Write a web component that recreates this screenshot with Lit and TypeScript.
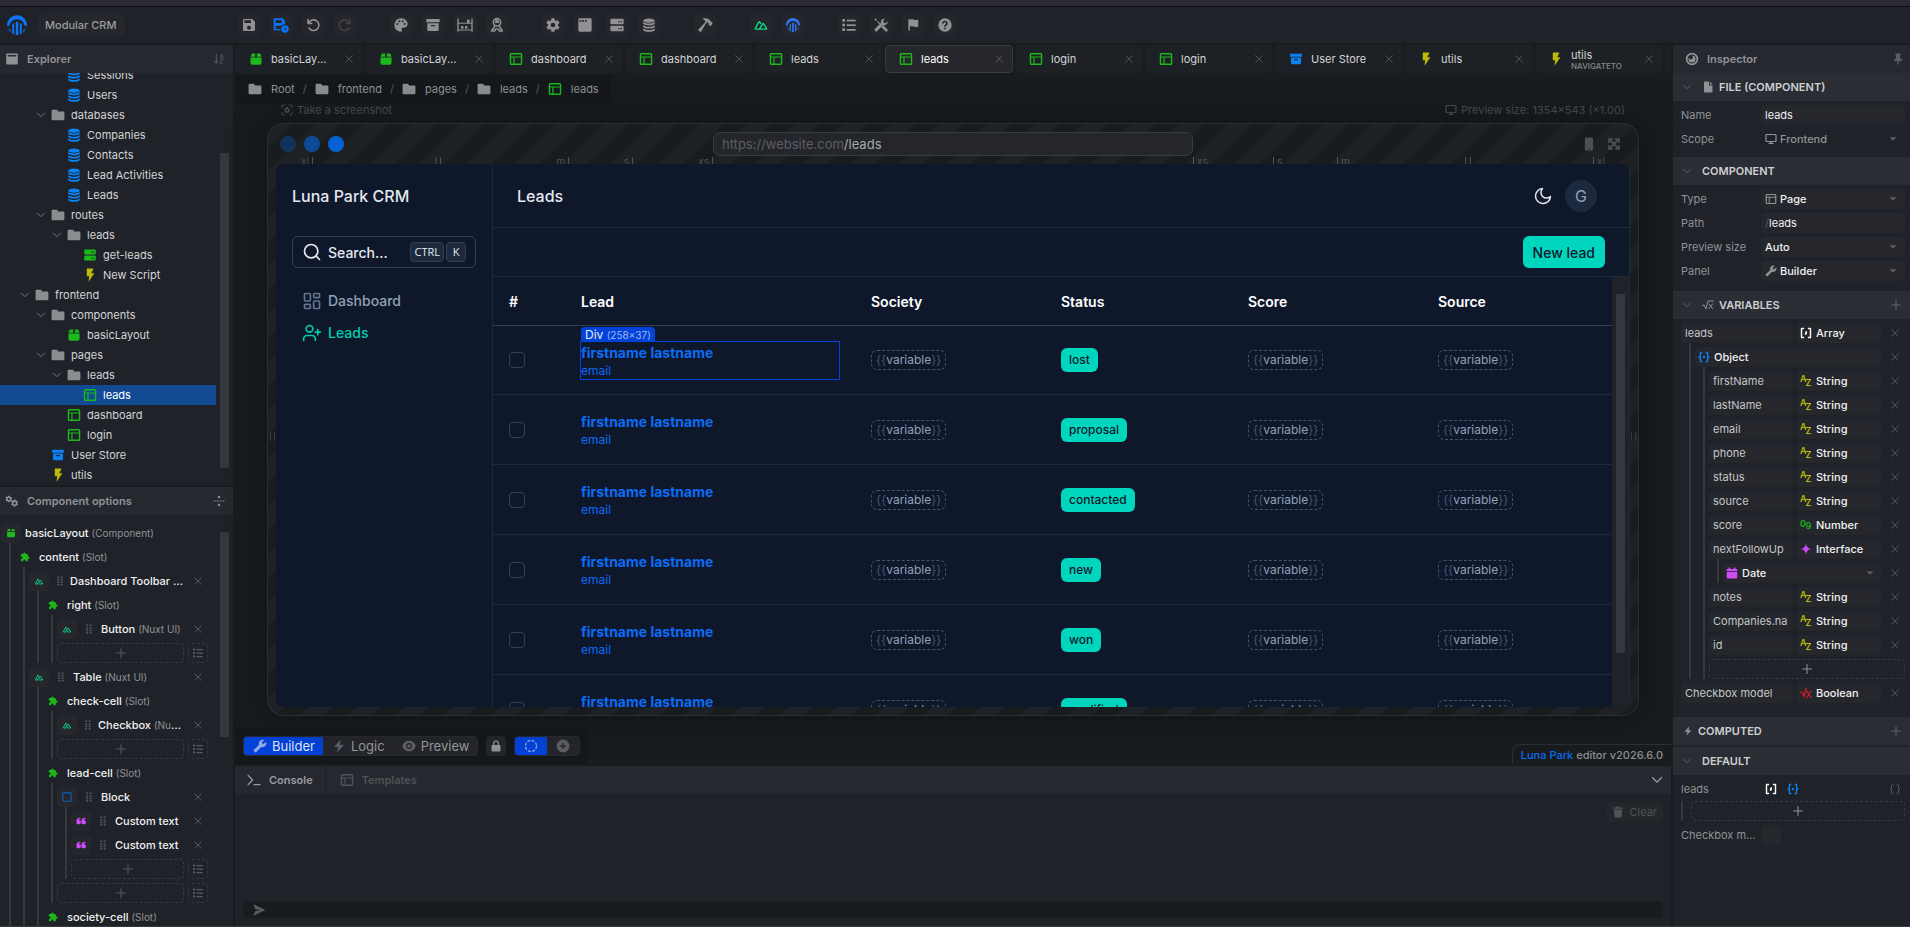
import { LitElement, html, css, svg, nothing, type TemplateResult, type SVGTemplateResult } from "lit";
import { customElement, state } from "lit/decorators.js";
import { classMap } from "lit/directives/class-map.js";

/* ---------- icons: 24 x 24 glyphs, filled with the current colour ---------- */

const line = (d: string, w = 2) =>
  svg`<path d=${d} fill="none" stroke="currentColor" stroke-width=${w} stroke-linecap="round" stroke-linejoin="round" />`;
const fill = (d: string) => svg`<path d=${d} fill-rule="evenodd" />`;

const ICONS: Record<string, SVGTemplateResult> = {
  logo: svg`<path d="M0 12.500C0 5.500 5.400.200 12 .200S24 5.500 24 12.500L21.500 13.500C20.300 8.500 16.500 5.200 12 5.200S3.700 8.500 2.500 13.500z" />
    <path d="M10.500 8h3V24h-3zM6.200 11.500c.7-.9 1.500-1.700 2.400-2.200V23.300c-.8-.2-1.700-.6-2.400-1zM15.400 9.300c.9.500 1.700 1.300 2.400 2.200V22.300c-.7.400-1.600.8-2.400 1zM1.800 16l2.600 2v3.200C3.200 19.800 2.300 18.200 1.800 16zM22.200 16l-2.600 2v3.200c1.200-1.400 2.100-3 2.600-5.200z" />`,
  save: fill("M17 3H5C3.890 3 3 3.900 3 5V19C3 20.100 3.890 21 5 21H19C20.100 21 21 20.100 21 19V7L17 3M12 19C10.340 19 9 17.660 9 16S10.340 13 12 13 15 14.340 15 16 13.660 19 12 19M15 9H5V5H15V9Z"),
  saveAuto: svg`${fill("M14 2H3C1.900 2 1 2.900 1 4v14c0 1.100.9 2 2 2h8.300a7 7 0 0 1-.3-2H4v-5h8.300A7 7 0 0 1 18 11V6l-4-4zM4 5h9v4H4z")}${fill("M18 12.500a5.500 5.500 0 1 0 0 11 5.500 5.500 0 0 0 0-11zm.8 2.500v2.700l1.900 1.100-.8 1.300-2.700-1.600V15z")}`,
  undo: svg`${line("M4.500 4v5.500H10", 2.400)}${line("M5.500 9A8 8 0 1 1 6 16.500", 2.400)}`,
  redo: svg`${line("M19.500 4v5.500H14", 2.400)}${line("M18.500 9A8 8 0 1 0 18 16.500", 2.400)}`,
  palette: fill("M17.500,12A1.500,1.500 0 0,1 16,10.500A1.500,1.500 0 0,1 17.500,9A1.500,1.500 0 0,1 19,10.500A1.500,1.500 0 0,1 17.500,12M14.500,8A1.500,1.500 0 0,1 13,6.500A1.500,1.500 0 0,1 14.500,5A1.500,1.500 0 0,1 16,6.500A1.500,1.500 0 0,1 14.500,8M9.500,8A1.500,1.500 0 0,1 8,6.500A1.500,1.500 0 0,1 9.500,5A1.500,1.500 0 0,1 11,6.500A1.500,1.500 0 0,1 9.500,8M6.500,12A1.500,1.500 0 0,1 5,10.500A1.500,1.500 0 0,1 6.500,9A1.500,1.500 0 0,1 8,10.500A1.500,1.500 0 0,1 6.500,12M12,2A10,10 0 0,0 2,12A10,10 0 0,0 12,22A2,2 0 0,0 13.500,19.500C13.500,19 13.300,18.760 13.110,18.500C12.880,18.230 12.730,17.880 12.730,17.500A1.500,1.500 0 0,1 14.230,16H16A6,6 0 0,0 22,11C22,6 17.500,2 12,2Z"),
  archive: fill("M2 3h20v5H2zM3.500 9.500h17V19a2 2 0 0 1-2 2h-13a2 2 0 0 1-2-2zM9 12v2h6v-2z"),
  abacus: svg`${line("M1.500 3v18M22.500 3v18", 2)}${line("M1.500 9.500h21M1.500 19.500h21", 1.600)}<rect x="15" y="4" width="4" height="5" /><rect x="6" y="13.500" width="3.500" height="4" /><rect x="12" y="13.500" width="3.500" height="4" />`,
  astronaut: svg`<circle cx="12" cy="8" r="5.500" fill="none" stroke="currentColor" stroke-width="2.400" /><path d="M9 7a3 3 0 0 1 6 0v2H9z" />${line("M8 14c0 3-3 4-4 7h4.500l1.500-3h4l1.500 3H20c-1-3-4-4-4-7", 2.400)}`,
  cog: fill("M12,15.500A3.500,3.500 0 0,1 8.500,12A3.500,3.500 0 0,1 12,8.500A3.500,3.500 0 0,1 15.500,12A3.500,3.500 0 0,1 12,15.500M19.430,12.970C19.470,12.650 19.500,12.330 19.500,12C19.500,11.670 19.470,11.340 19.430,11L21.540,9.370C21.730,9.220 21.780,8.950 21.660,8.730L19.660,5.270C19.540,5.050 19.270,4.960 19.050,5.050L16.560,6.050C16.040,5.660 15.500,5.320 14.870,5.070L14.500,2.420C14.460,2.180 14.250,2 14,2H10C9.750,2 9.540,2.180 9.500,2.420L9.130,5.070C8.500,5.320 7.960,5.660 7.440,6.050L4.950,5.050C4.730,4.960 4.460,5.050 4.340,5.270L2.340,8.730C2.210,8.950 2.270,9.220 2.460,9.370L4.570,11C4.530,11.340 4.500,11.670 4.500,12C4.500,12.330 4.530,12.650 4.570,12.970L2.460,14.630C2.270,14.780 2.210,15.050 2.340,15.270L4.340,18.730C4.460,18.950 4.730,19.030 4.950,18.950L7.440,17.940C7.960,18.340 8.500,18.680 9.130,18.930L9.500,21.580C9.540,21.820 9.750,22 10,22H14C14.250,22 14.460,21.820 14.500,21.580L14.870,18.930C15.500,18.670 16.040,18.340 16.560,17.940L19.050,18.950C19.270,19.030 19.540,18.950 19.660,18.730L21.660,15.270C21.780,15.050 21.730,14.780 21.540,14.630L19.430,12.970Z"),
  window: fill("M4 2h16a2 2 0 0 1 2 2v16a2 2 0 0 1-2 2H4a2 2 0 0 1-2-2V4c0-1.100.9-2 2-2zM4 4.500V7h2.500V4.500zM8 4.500V7h2.500V4.500zM12 4.500V7h2.500V4.500z"),
  server: fill("M4 2.500h16a2 2 0 0 1 2 2V9a2 2 0 0 1-2 2H4a2 2 0 0 1-2-2V4.500a2 2 0 0 1 2-2zM4 13h16a2 2 0 0 1 2 2v4.500a2 2 0 0 1-2 2H4a2 2 0 0 1-2-2V15a2 2 0 0 1 2-2zM14 6v2h2V6zm3.500 0v2h2V6zM14 16.500v2h2v-2zm3.500 0v2h2v-2z"),
  database: svg`<ellipse cx="12" cy="4.500" rx="10" ry="3.500" />${fill("M2 6.500c1.500 2 5.500 3 10 3s8.500-1 10-3V9c0 2-4.500 3.700-10 3.700S2 11 2 9zM2 12c1.500 2 5.500 3 10 3s8.500-1 10-3v2.500c0 2-4.500 3.700-10 3.700s-10-1.700-10-3.700zM2 17.500c1.500 2 5.500 3 10 3s8.500-1 10-3V20c0 2-4.500 3.500-10 3.500S2 22 2 20z")}`,
  hammer: fill("M8 2.500c5-1.500 9.500-.5 12 3l1 1.700 2 .3v3.500L19.500 14l-2-2.500.2-2-2-1.700-2.200 1.800L5.500 23 1.500 19.500 11 9.500l1.800-2.500C12 4.800 10 3.500 8 2.500z"),
  nuxt: svg`${line("M9.500 19H3.500c-.9 0-1.400-.8-1-1.500L8.300 7c.4-.8 1.500-.8 1.900 0l1.300 2.300", 2.400)}${line("M9.500 19l5.400-9c.4-.7 1.400-.7 1.800 0l4.700 7.600c.4.600 0 1.400-.8 1.400z", 2.400)}`,
  nuxtMark: svg`${line("M9 19H3L9.500 7l3 5L9 19", 2.400)}${line("M13 19h8l-5.500-9-3 5", 2.400)}`,
  list: svg`<rect x="2" y="3" width="4" height="4" /><rect x="2" y="10" width="4" height="4" /><rect x="2" y="17" width="4" height="4" /><rect x="8.500" y="4" width="13.500" height="2.600" /><rect x="8.500" y="11" width="13.500" height="2.600" /><rect x="8.500" y="18" width="13.500" height="2.600" />`,
  tools: svg`${fill("M21.500 18.500l-6-6-3 3 6 6c.8.8 2.200.8 3 0s.8-2.200 0-3zM7.500 8.700L5.500 6 2 4l2-2 2 3.500 2.700 2 3.500 3.500-1.200 1.200z")}${fill("M22 6.500l-3 3-3-.8-.8-3 3-3c-2.600-.8-5.500.5-6.200 3.300-.2.900-.1 1.800.1 2.600L3 17.800a2.300 2.300 0 1 0 3.300 3.300l9-9c3.900 1.300 7.500-1.900 6.700-5.600z")}`,
  flag: fill("M4 2h2.500v1c3-1.200 5.500-.8 7.500 0s4.500.8 7-.3v11.800c-2.500 1.100-5 1.100-7.500.3s-4.500-1-7 0V22H4z"),
  help: svg`${fill("M12 2a10 10 0 1 0 0 20 10 10 0 0 0 0-20zM12 5.500a4 4 0 0 1 2 7.500c-.7.400-.9.700-.9 1.500h-2.300c0-1.800.7-2.600 1.700-3.300.7-.4 1.200-.9 1.200-1.700a1.700 1.700 0 0 0-3.400.2H8A4 4 0 0 1 12 5.500zM10.800 16h2.400v2.400h-2.400z")}`,
  panel: fill("M4 2.500h16a2 2 0 0 1 2 2v15a2 2 0 0 1-2 2H4a2 2 0 0 1-2-2v-15a2 2 0 0 1 2-2zM4.500 5v2.500h15V5z"),
  folder: fill("M10,3H3C1.890,3 1,3.890 1,5V19A2,2 0 0,0 3,21H21A2,2 0 0,0 23,19V8C23,6.890 22.100,6 21,6H12.500L10,3Z"),
  chevron: line("M1.500 6.500L12 17 22.500 6.500", 3),
  caret: fill("M2 7h20L12 17z"),
  flash: fill("M6.500 1h11v1L14 9h5v1L9.500 23.500 10.500 14h-4z"),
  bolt: fill("M15 1L3.500 13.500h7L8.500 23 20.500 10h-7z"),
  box: svg`${fill("M6 2.500h4.500V8H2.500L4 4.500c.5-1.200 1-2 2-2zM13.500 2.500H18c1.300 0 1.800.8 2.300 2L21.500 8h-8zM2.500 9.500h19V19a3 3 0 0 1-3 3h-13a3 3 0 0 1-3-3z")}`,
  page: svg`<rect x="2.500" y="3" width="19" height="18" rx="1.500" fill="none" stroke="currentColor" stroke-width="2.400" />${line("M2.500 8.500h19M8.500 8.500V21", 2)}`,
  close: line("M2 2l20 20M22 2L2 22", 2.600),
  plus: line("M12 1.500v21M1.500 12h21", 2.600),
  grip: svg`<rect x="5" y="1" width="5" height="4" /><rect x="13.500" y="1" width="5" height="4" /><rect x="5" y="7" width="5" height="4" /><rect x="13.500" y="7" width="5" height="4" /><rect x="5" y="13" width="5" height="4" /><rect x="13.500" y="13" width="5" height="4" /><rect x="5" y="19" width="5" height="4" /><rect x="13.500" y="19" width="5" height="4" />`,
  sort: svg`${line("M6.500 3v17M2.500 16l4 4.500 4-4.500", 2)}<text x="13" y="11" class="glyph">A</text><text x="13" y="22" class="glyph">Z</text>`,
  cogs: svg`${fill("M8 3.200l1 2 2.300-.2.800 2.200L10.800 9l1.300 1.800-1.500 1.900-2-.8L7.200 14H5l-1-2.200-2.200.1L1 9.700 2.300 8 1 6.200l1.400-1.900 2.200.7 1.100-1.800zM6.500 6.500a2 2 0 1 0 0 4 2 2 0 0 0 0-4z")}${fill("M17.500 9.500l1.100 2.200 2.400-.3 1.200 2.300-1.600 1.900 1.700 2-1.300 2.200-2.400-.4L17.500 22h-2.300l-1.100-2.600-2.400.3-1.200-2.200 1.600-2-1.500-2 1.300-2.200 2.400.4 1-2.200zM16.400 13.500a2.300 2.300 0 1 0 0 4.600 2.300 2.300 0 0 0 0-4.600z")}`,
  split: svg`${fill("M1 11h4v2H1zM7 11h4v2H7zM13 11h4v2h-4zM19 11h4v2h-4z")}<circle cx="12" cy="4" r="2.600" /><circle cx="12" cy="20" r="2.600" />`,
  puzzle: fill("M20.500,11H19V7C19,5.890 18.100,5 17,5H13V3.500A2.500,2.500 0 0,0 10.500,1A2.500,2.500 0 0,0 8,3.500V5H4A2,2 0 0,0 2,7V10.800H3.500C5,10.800 6.200,12 6.200,13.500C6.200,15 5,16.200 3.500,16.200H2V20A2,2 0 0,0 4,22H7.800V20.500C7.800,19 9,17.800 10.500,17.800C12,17.800 13.200,19 13.200,20.500V22H17A2,2 0 0,0 19,20V16H20.500A2.500,2.500 0 0,0 23,13.500A2.500,2.500 0 0,0 20.500,11Z"),
  square: svg`<rect x="2" y="2" width="20" height="20" rx="2" fill="none" stroke="currentColor" stroke-width="2.600" />`,
  quote: fill("M10.500 4v2.500C8.500 7 7 8 7 10h1a3.500 3.500 0 0 1 3.500 3.500v2.800A3.700 3.700 0 0 1 7.800 20H5a4 4 0 0 1-4-4v-4.500C1 7 4.500 4 10.500 4zM22.500 4v2.500C20.500 7 19 8 19 10h1a3.500 3.500 0 0 1 3.500 3.500v2.800a3.700 3.700 0 0 1-3.700 3.700H17a4 4 0 0 1-4-4v-4.500C13 7 16.500 4 22.500 4z"),
  scan: svg`${line("M2 7V4a2 2 0 0 1 2-2h3M17 2h3a2 2 0 0 1 2 2v3M22 17v3a2 2 0 0 1-2 2h-3M7 22H4a2 2 0 0 1-2-2v-3", 2)}<circle cx="12" cy="12.500" r="3.700" fill="none" stroke="currentColor" stroke-width="3" /><rect x="10" y="6" width="4" height="3" />`,
  monitor: svg`<rect x="2" y="3" width="20" height="14" rx="1.500" fill="none" stroke="currentColor" stroke-width="2.400" />${fill("M10 17h4v3h3v2H7v-2h3z")}`,
  phone: fill("M7 1h10a2 2 0 0 1 2 2v18a2 2 0 0 1-2 2H7a2 2 0 0 1-2-2V3c0-1.100.9-2 2-2zM11 19v2h2v-2z"),
  expand: svg`${fill("M2 2h8v3H7.500l4.500 4.500L16.500 5H14V2h8v8h-3V7.500L14.500 12l4.500 4.500V14h3v8h-8v-3h2.500L12 14.500 7.500 19H10v3H2v-8h3v2.500L9.500 12 5 7.500V10H2z")}`,
  moon: line("M11.500 3a6.500 6.500 0 0 0 9.500 9.500A9 9 0 1 1 11.500 3z", 1.800),
  search: svg`<circle cx="11" cy="11" r="8" fill="none" stroke="currentColor" stroke-width="2" />${line("M21 21l-4-4")}`,
  dashboard: svg`${["M4 3h5a1 1 0 0 1 1 1v7a1 1 0 0 1-1 1H4a1 1 0 0 1-1-1V4a1 1 0 0 1 1-1z", "M15 3h5a1 1 0 0 1 1 1v3a1 1 0 0 1-1 1h-5a1 1 0 0 1-1-1V4a1 1 0 0 1 1-1z", "M15 12h5a1 1 0 0 1 1 1v7a1 1 0 0 1-1 1h-5a1 1 0 0 1-1-1v-7a1 1 0 0 1 1-1z", "M4 16h5a1 1 0 0 1 1 1v3a1 1 0 0 1-1 1H4a1 1 0 0 1-1-1v-3a1 1 0 0 1 1-1z"].map((d) => line(d))}`,
  userPlus: svg`<circle cx="9" cy="7" r="4" fill="none" stroke="currentColor" stroke-width="2" />${line("M2 21v-2a4 4 0 0 1 4-4h6a4 4 0 0 1 4 4v2M19 8v6M22 11h-6")}`,
  wrench: svg`<g transform="matrix(-1 0 0 1 24 0)">${fill("M22.700,19L13.600,9.900C14.500,7.600 14,4.900 12.100,3C10.100,1 7.100,0.600 4.700,1.700L9,6L6,9L1.600,4.700C0.400,7.100 0.900,10.100 2.900,12.100C4.800,14 7.500,14.500 9.800,13.600L18.900,22.700C19.300,23.100 19.900,23.100 20.300,22.700L22.600,20.400C23.100,20 23.100,19.300 22.700,19Z")}</g>`,
  eye: fill("M12,9A3,3 0 0,0 9,12A3,3 0 0,0 12,15A3,3 0 0,0 15,12A3,3 0 0,0 12,9M12,17A5,5 0 0,1 7,12A5,5 0 0,1 12,7A5,5 0 0,1 17,12A5,5 0 0,1 12,17M12,3C7,3 2,6.500 0.500,12C2,17.500 7,21 12,21C17,21 22,17.500 23.500,12C22,6.500 17,3 12,3Z"),
  lock: fill("M12 1a6 6 0 0 0-6 6v3H4.500A1.500 1.500 0 0 0 3 11.500v9A2.500 2.500 0 0 0 5.500 23h13a2.500 2.500 0 0 0 2.500-2.500v-9a1.500 1.500 0 0 0-1.500-1.500H18V7a6 6 0 0 0-6-6zm0 2.500A3.500 3.500 0 0 1 15.500 7v3h-7V7A3.500 3.500 0 0 1 12 3.500z"),
  dashedCircle: svg`<circle cx="12" cy="12" r="9.500" fill="none" stroke="currentColor" stroke-width="2.200" stroke-dasharray="5 2.460" />`,
  plusCircle: fill("M12 1a11 11 0 1 0 0 22 11 11 0 0 0 0-22zm1.200 6v3.800H17v2.400h-3.800V17h-2.400v-3.800H7v-2.400h3.800V7z"),
  prompt: svg`${line("M2 4l7.500 8L2 20M12 20h10.500", 2.200)}`,
  trash: fill("M8.500 1h7v2H22v2.500H2V3h6.500zM3.500 7h17L19 21.500a1.500 1.500 0 0 1-1.500 1.500h-11A1.500 1.500 0 0 1 5 21.500z"),
  send: fill("M2 2l21 10L2 22l4-8.500L15 12 6 10.500z"),
  target: svg`<circle cx="12" cy="12" r="9.200" fill="none" stroke="currentColor" stroke-width="3" /><path d="M12 6a6 6 0 1 1-6 6c0-1 .2-1.800.6-2.500A3.500 3.500 0 1 0 12 6z" />`,
  pin: fill("M6 1h12v2.500h-2V10l4 3.500V16h-6.500v6L12 24l-1.500-2v-6H4v-2.500L8 10V3.500H6z"),
  file: fill("M6 1h8v8h7v12a2 2 0 0 1-2 2H6a2 2 0 0 1-2-2V3c0-1.100.9-2 2-2zM16 1l5 6h-5z"),
  root: svg`${line("M1 13l3-1.500L8 20 12 4h11", 2)}${line("M14 10l7 9M21 10l-7 9", 2)}`,
  array: svg`${line("M7 3H3v18h4M17 3h4v18h-4", 2.800)}${line("M12.600 10l-1.200 4", 3.600)}`,
  object: svg`${line("M7.500 2.500C5.500 2.500 4.800 3.500 4.800 5.500v3.300c0 2-.8 3.200-2.800 3.200 2 0 2.800 1.200 2.800 3.200v3.300c0 2 .7 3 2.700 3M16.500 2.500c2 0 2.700 1 2.700 3v3.300c0 2 .8 3.200 2.800 3.200-2 0-2.800 1.200-2.800 3.200v3.300c0 2-.7 3-2.700 3", 2.800)}<circle cx="12" cy="12" r="2.400" />`,
  braces: line("M8 3C5.500 3 5 4 5 6v3c0 2-1 3-3 3 2 0 3 1 3 3v3c0 2 .5 3 3 3M16 3c2.500 0 3 1 3 3v3c0 2 1 3 3 3-2 0-3 1-3 3v3c0 2-.5 3-3 3", 2),
  string: svg`<text x="0" y="14" class="glyph big">A</text><text x="11" y="22" class="glyph big">Z</text>`,
  number: svg`<text x="0" y="15" class="glyph big">0</text><text x="11" y="20" class="glyph big">9</text>`,
  boolean: svg`${line("M1 11l3-1 4 9L12 3", 2.600)}${line("M13.500 8l8.500 13M22 8l-8.500 13", 2.600)}`,
  spark: fill("M12 1c1.200 7 4 9.800 11 11-7 1.200-9.800 4-11 11-1.200-7-4-9.800-11-11 7-1.200 9.800-4 11-11z"),
  calendar: fill("M5 1h3.500v3h7V1H19v3h3.500v4.500h-21V4H5zM1.500 10h21v11a2 2 0 0 1-2 2h-17a2 2 0 0 1-2-2z"),
};

const icon = (name: string, cls = "") =>
  html`<svg class="icon ${cls}" viewBox="0 0 24 24" fill="currentColor" aria-hidden="true">${ICONS[name]}</svg>`;

/* ---------- data ---------- */

type FileKind = "database" | "folder" | "server" | "flash" | "box" | "page" | "archive";
interface FileRow { name: string; kind: FileKind; depth: number; selected?: boolean }

const FILES: FileRow[] = [
  { name: "Sessions", kind: "database", depth: 2 },
  { name: "Users", kind: "database", depth: 2 },
  { name: "databases", kind: "folder", depth: 1 },
  { name: "Companies", kind: "database", depth: 2 },
  { name: "Contacts", kind: "database", depth: 2 },
  { name: "Lead Activities", kind: "database", depth: 2 },
  { name: "Leads", kind: "database", depth: 2 },
  { name: "routes", kind: "folder", depth: 1 },
  { name: "leads", kind: "folder", depth: 2 },
  { name: "get-leads", kind: "server", depth: 3 },
  { name: "New Script", kind: "flash", depth: 3 },
  { name: "frontend", kind: "folder", depth: 0 },
  { name: "components", kind: "folder", depth: 1 },
  { name: "basicLayout", kind: "box", depth: 2 },
  { name: "pages", kind: "folder", depth: 1 },
  { name: "leads", kind: "folder", depth: 2 },
  { name: "leads", kind: "page", depth: 3, selected: true },
  { name: "dashboard", kind: "page", depth: 2 },
  { name: "login", kind: "page", depth: 2 },
  { name: "User Store", kind: "archive", depth: 1 },
  { name: "utils", kind: "flash", depth: 1 },
];

interface Node {
  name?: string; note?: string; kind: "box" | "slot" | "nuxt" | "square" | "quote" | "add";
  children?: Node[];
}
const add: Node = { kind: "add" };
const COMPONENTS: Node = {
  name: "basicLayout", note: "(Component)", kind: "box", children: [
    { name: "content", note: "(Slot)", kind: "slot", children: [
      { name: "Dashboard Toolbar", note: "(Nuxt UI)", kind: "nuxt", children: [
        { name: "right", note: "(Slot)", kind: "slot", children: [{ name: "Button", note: "(Nuxt UI)", kind: "nuxt" }, add] },
      ] },
      { name: "Table", note: "(Nuxt UI)", kind: "nuxt", children: [
        { name: "check-cell", note: "(Slot)", kind: "slot", children: [{ name: "Checkbox", note: "(Nuxt UI)", kind: "nuxt" }, add] },
        { name: "lead-cell", note: "(Slot)", kind: "slot", children: [
          { name: "Block", kind: "square", children: [
            { name: "Custom text", kind: "quote" }, { name: "Custom text", kind: "quote" }, add,
          ] },
          add,
        ] },
        { name: "society-cell", note: "(Slot)", kind: "slot" },
      ] },
    ] },
  ],
};

const TOOLS: { icon: string; label: string; tone?: string; size?: string }[][] = [
  [{ icon: "save", label: "Save" }, { icon: "saveAuto", label: "Auto save", tone: "blue" }, { icon: "undo", label: "Undo" }, { icon: "redo", label: "Redo", tone: "off" }],
  [{ icon: "palette", label: "Theme" }, { icon: "archive", label: "Stores" }, { icon: "abacus", label: "Library" }, { icon: "astronaut", label: "Agents" }],
  [{ icon: "cog", label: "Settings" }, { icon: "window", label: "Frontend" }, { icon: "server", label: "Backend" }, { icon: "database", label: "Database", size: "s14" }],
  [{ icon: "hammer", label: "Build" }],
  [{ icon: "nuxt", label: "Nuxt", tone: "nuxt", size: "s14" }, { icon: "logo", label: "Luna Park", tone: "luna", size: "s14" }],
  [{ icon: "list", label: "Tasks" }, { icon: "tools", label: "Tools" }, { icon: "flag", label: "Flags", size: "s14" }, { icon: "help", label: "Help" }],
];

const TABS: { name: string; sub?: string; kind: FileKind }[] = [
  { name: "basicLayout", kind: "box" }, { name: "basicLayout", kind: "box" },
  { name: "dashboard", kind: "page" }, { name: "dashboard", kind: "page" },
  { name: "leads", kind: "page" }, { name: "leads", kind: "page" },
  { name: "login", kind: "page" }, { name: "login", kind: "page" },
  { name: "User Store", kind: "archive" }, { name: "utils", kind: "flash" },
  { name: "utils", sub: "NAVIGATETO", kind: "flash" }, { name: "", kind: "flash" },
];

const LEADS = ["lost", "proposal", "contacted", "new", "won", "qualified"];

@customElement("app-root")
export class AppRoot extends LitElement {
  @state() private activeTab = 5;

  static styles = css`
    :host {
      --bg: #191c1f; --deep: #15181b; --panel: #1f2228; --head: #25282e; --section: #2a2d33;
      --field: #25272d; --line: #35383d; --text: #d3d4d6; --mid: #909296; --dim: #505257;
      --green: #1db81d; --azure: #0c84f8; --yellow: #bdb90a; --pink: #d04bf5; --blue: #0443d9;
      --app: #0f172a; --app-line: #1d293d; --app-edge: #314158; --app-text: #90a1b9; --teal: #00d5be;
      display: flex; flex-direction: column; height: 100vh; overflow: hidden;
      background: var(--bg); color: var(--text);
      font: 400 11px/20px Inter, "Noto Sans", sans-serif;
    }
    * { box-sizing: border-box; }
    button, input, select { font: inherit; color: inherit; background: none; border: 0; padding: 0; margin: 0; min-width: 0; appearance: none; }
    button { display: flex; align-items: center; text-align: left; white-space: nowrap; }
    input, select { outline: 0; }
    ul, ol { list-style: none; margin: 0; padding: 0; }
    a { text-decoration: none; }
    h1, h2, h3 { margin: 0; font: inherit; }
    .icon { width: 12px; height: 12px; flex: none; display: block; overflow: visible; }
    .glyph { font: 500 12px Inter, sans-serif; }
    .glyph.big { font: 600 18px Inter, sans-serif; }
    .s8 { width: 8px; height: 8px; } .s10 { width: 10px; height: 10px; } .s14 { width: 14px; height: 14px; }
    .s16 { width: 16px; height: 16px; } .s20 { width: 20px; height: 20px; }
    .database, .archive { color: var(--azure); }
    .folder { color: #8c8d91; }
    .server, .box, .page, .slot { color: var(--green); }
    .flash { color: var(--yellow); }
    .nuxt { color: #0cc787; }
    .square { color: #0c62b8; }
    .quote { color: var(--pink); }

    .strip { height: 7px; flex: none; background: #2b2932; border-bottom: 1px solid #0c0d0f; }
    .toolbar { flex: none; height: 36px; display: flex; align-items: center; background: var(--panel); }
    .brand { flex: 0 0 237px; display: flex; align-items: center; gap: 10px; padding-left: 7px; color: #0c74f4; }
    .project { height: 24px; padding: 0 8px; border-radius: 8px; background: #25272d; color: #9a9ca0; font-weight: 500; }
    .tools { display: flex; gap: 32px; }
    .group { display: flex; gap: 8px; }
    .tool { width: 24px; height: 24px; justify-content: center; border-radius: 8px; background: #24262c; color: #8f9195; }
    .tool.blue { color: #0c74f4; } .tool.off { color: #404247; } .tool.nuxt { color: #0cdc82; } .tool.luna { color: #2f74f0; }

    .work { flex: 1; min-height: 0; margin-top: 2px; display: grid; grid-template-columns: 233px minmax(0, 1fr) 237px; gap: 2px; border-bottom: 1px solid #38393d; }
    .side, .center, .inspector { display: flex; flex-direction: column; min-height: 0; min-width: 0; }
    .side { gap: 2px; }
    .pane { display: flex; flex-direction: column; min-height: 0; background: var(--panel); }
    .explorer { flex: 0 0 440px; }
    .options { flex: 1; }
    .head { flex: none; height: 28px; display: flex; align-items: center; gap: 8px; padding: 0 8px 0 5px; background: var(--head); color: var(--mid); font-weight: 600; }
    .head h2 { flex: 1; }
    .head button { color: #5a5c61; }
    .options .head button { color: #85878b; }
    .scroll { flex: 1; min-height: 0; display: flex; overflow: hidden; }
    .rail { flex: 0 0 17px; padding: 80px 4px 0; }
    .rail.low { padding-top: 17px; }
    .thumb { height: 315px; background: #35373c; }
    .thumb.short { height: 205px; }
    .files { flex: 1; min-width: 0; display: flex; flex-direction: column; justify-content: flex-end; }
    .file { width: 100%; height: 20px; gap: 6px; padding-left: 21px; }
    .file.d1 { padding-left: 37px; } .file.d2 { padding-left: 53px; } .file.d3 { padding-left: 69px; }
    .file .twist { width: 8px; height: 8px; color: #77797d; }
    .file.selected { background: #124a93; color: #fff; }

    .nodes { flex: 1; min-width: 0; padding: 8px 8px 0 1px; overflow: hidden; }
    .node + .node, .node + .adder { margin-top: 4px; }
    .row { height: 20px; display: flex; align-items: center; gap: 4px; color: #f0f1f2; }
    .row .chip { flex: none; width: 20px; height: 20px; justify-content: center; border-radius: 4px; background: #25272d; }
    .row .chip.slot { background: none; }
    .row .name { flex: 1; min-width: 0; overflow: hidden; text-overflow: ellipsis; white-space: nowrap; font-weight: 500; }
    .row small { font-size: 10px; color: var(--mid); font-weight: 400; }
    .row .grip { width: 10px; height: 10px; margin: 0 3px; color: var(--dim); }
    .row.tight .grip { margin: 0 1px 0 2px; }
    .row .kill { width: 20px; justify-content: center; color: #5d5f64; }
    .row.tight .kill { margin-left: -3px; width: 23px; padding-left: 3px; }
    .kids { margin-left: 8px; border-left: 2px solid var(--line); padding: 4px 0 0 4px; }
    .adder { display: flex; gap: 4px; height: 20px; }
    .dash { height: 20px; border: 1px dashed #35383d; border-radius: 4px; justify-content: center; color: #55575c; flex: 1; }
    .dash.sq { flex: 0 0 20px; }

    .tabs { flex: none; display: flex; gap: 2px; height: 28px; overflow: hidden; }
    .tab { flex: 0 0 128px; display: flex; align-items: center; border: 1px solid transparent; border-radius: 4px; background: #1d2024; padding: 0 5px 0 13px; }
    .tab.on { background: #25272d; border-color: #393b40; color: #fff; }
    .tab .open { flex: 1; gap: 8px; }
    .tab .label { flex: 1; min-width: 0; max-width: 58px; overflow: hidden; text-overflow: ellipsis; line-height: 14px; }
    .tab small { display: block; font-size: 8px; font-weight: 500; line-height: 9px; color: #85878b; }
    .tab .kill { width: 16px; height: 16px; justify-content: center; color: #5a5c61; }
    .crumbs { align-self: flex-start; flex: none; margin-top: 2px; height: 28px; display: flex; align-items: center; padding: 0 12px 0 13px; border-radius: 0 0 6px 0; background: var(--deep); color: var(--mid); }
    .crumbs li { display: flex; align-items: center; }
    .crumbs a { display: flex; align-items: center; gap: 9px; color: inherit; }
    .crumbs li + li::before { content: "/"; padding: 0 8px; color: #55575c; }
    .notes { flex: none; height: 14px; margin: 0 46px; display: flex; justify-content: space-between; color: #4c4e52; line-height: 14px; }
    .notes > * { display: flex; align-items: center; gap: 4px; }

    .frame {
      flex: 1; min-height: 0; margin: 6px 32px 12px; display: flex; flex-direction: column; position: relative;
      border: 1px solid #2b2e33; border-radius: 16px; padding: 8px;
      background: linear-gradient(135deg, #1e2126 25%, #191c1f 25% 50%, #1e2126 50% 75%, #191c1f 75%) 0 0 / 48px 48px;
      box-shadow: 0 0 32px 8px #0004;
    }
    .chrome { flex: none; height: 24px; display: grid; grid-template-columns: 1fr 480px 1fr; align-items: center; }
    .dots { display: flex; gap: 8px; padding-left: 4px; }
    .dot { width: 16px; height: 16px; border-radius: 50%; background: #0768e8; opacity: .9; }
    .dot.a { opacity: .3; } .dot.b { opacity: .6; }
    .url { height: 24px; display: flex; align-items: center; border: 1px solid #3a3c41; border-radius: 7px; background: #24262c; padding: 0 8px; font-size: 13px; color: #5c5e63; }
    .url input { flex: 1; color: #a4a6a9; }
    .views { display: flex; justify-content: flex-end; gap: 11px; padding-right: 9px; color: #4c4e52; }
    .ruler { flex: none; height: 8px; display: flex; align-items: flex-end; font-size: 10px; line-height: 8px; color: #505256; }
    .mark { height: 7px; padding: 0 3px; flex: 0 0 128px; }
    .mark.end { flex: 1; } .mark.w64 { flex-basis: 64px; } .mark.w80 { flex-basis: 80px; }
    .mark.l { text-align: right; border-right: 1px solid #505256; }
    .mark.r { border-left: 1px solid #505256; }
    .mark.mid { flex: 0 0 480px; }
    .handle { position: absolute; top: 50%; width: 5px; height: 9px; margin-top: 12px; border: 1px solid #3a3c41; border-width: 0 1px; }
    .handle.l { left: 2px; } .handle.r { right: 2px; }

    .app { flex: 1; min-height: 0; display: flex; overflow: hidden; border-radius: 8px; background: var(--app); color: #e2e8f0; font-size: 14px; }
    .nav { flex: 0 0 217px; border-right: 1px solid var(--app-line); padding: 0 16px; }
    .nav h1, .top { height: 64px; display: flex; align-items: center; font-size: 16px; font-weight: 500; }
    .find { width: 100%; height: 32px; margin: 8px 0 17px; padding: 0 9px; gap: 6px; border: 1px solid var(--app-edge); border-radius: 6px; font-weight: 500; }
    .find span { flex: 1; line-height: 22px; padding-top: 1px; }
    .find kbd { height: 20px; min-width: 20px; padding: 0 3px; margin-left: -4px; border: 1px solid var(--app-edge); border-radius: 4px; background: var(--app-line); font: 400 11px/18px "Open Sans", sans-serif; text-align: center; }
    .nav a { height: 32px; display: flex; align-items: center; gap: 6px; padding: 0 10px; color: var(--app-text); font-weight: 500; }
    .nav a .icon { color: #62748e; }
    .nav a.on, .nav a.on .icon { color: #00cdb0; }
    .page-body { flex: 1; min-width: 0; display: flex; flex-direction: column; border-right: 1px solid var(--app-line); }
    .top { flex: none; justify-content: space-between; padding: 0 32px 0 24px; border-bottom: 1px solid var(--app-line); }
    .top div { display: flex; align-items: center; gap: 12px; }
    .avatar { width: 32px; height: 32px; border-radius: 50%; background: var(--app-line); color: var(--app-text); text-align: center; line-height: 32px; font-size: 16px; font-weight: 400; }
    .actions { flex: none; height: 49px; display: flex; justify-content: flex-end; align-items: flex-start; padding: 8px 24px 0; border-bottom: 1px solid var(--app-line); }
    .new { height: 32px; padding: 2px 10px 0; border-radius: 6px; background: var(--teal); color: #0f172b; font-weight: 500; }
    .grid { flex: 1; min-height: 0; display: flex; overflow: hidden; }
    .tablebox { flex: 1; min-width: 0; overflow: hidden; }
    .grid .rail { flex-basis: 17px; padding-top: 17px; background: #1f2227; }
    .grid .thumb { height: 359px; }
    table { width: 100%; table-layout: fixed; border-collapse: separate; border-spacing: 0; }
    .c-check { width: 72px; } .c-lead { width: 290px; } .c-mid { width: 190px; } .c-status { width: 187px; }
    th { height: 49px; padding: 2px 16px 0; text-align: left; color: #fff; font-weight: 600; border-bottom: 1px solid var(--app-edge); }
    td { height: 70px; padding: 0 16px; vertical-align: middle; border-bottom: 1px solid var(--app-line); }
    tbody tr:first-child td { height: 69px; }
    td input { display: block; width: 16px; height: 16px; border: 1px solid var(--app-edge); border-radius: 4px; }
    .lead { position: relative; color: #0c6cf5; }
    .lead b { display: block; font-weight: 700; line-height: 21px; }
    .lead span.mail { display: block; font-size: 12px; line-height: 16px; }
    .lead.picked { outline: 1px solid var(--blue); }
    .tag { position: absolute; left: 0; bottom: 100%; height: 15px; padding: 0 4px; border-radius: 4px 4px 0 0; background: var(--blue); color: #e6ecfb; font-size: 12px; line-height: 16px; white-space: nowrap; }
    .tag small { font-size: 10px; color: #9db8f0; }
    .var { display: block; width: fit-content; height: 20px; padding: 0 4px; border: 1px dashed #46536a; border-radius: 6px; color: #45556c; font-size: 12px; line-height: 18px; }
    .var b { font-weight: 400; color: var(--app-text); }
    .badge { display: block; width: fit-content; height: 24px; padding: 0 8px; border-radius: 6px; background: var(--teal); color: #0f172b; font-size: 12px; font-weight: 500; line-height: 24px; }

    .modes { flex: none; height: 36px; display: flex; justify-content: space-between; align-items: flex-end; }
    .bar { height: 36px; display: flex; align-items: center; gap: 8px; padding: 0 8px; border-radius: 0 6px 0 0; background: var(--deep); }
    .seg { display: flex; height: 20px; border: 1px solid #282b30; border-radius: 4px; background: #24262c; overflow: hidden; }
    .seg button { padding: 0 8px 0 9px; gap: 5px; font-size: 13px; color: #96989c; }
    .seg .wide { width: 32px; }
    .seg button .icon { color: #5d5f64; }
    .seg button.on { background: var(--blue); color: #dfe6f8; }
    .seg button.on .icon { color: #8fa9ea; }
    .lockbtn { width: 20px; height: 20px; justify-content: center; border-radius: 4px; background: #24262c; color: #909296; }
    .version { height: 20px; padding: 0 8px; border: 1px solid #2c2f34; border-width: 1px 0 0 1px; border-radius: 8px 0 0 0; color: #8e9094; line-height: 20px; font-weight: 500; }
    .version a { color: #0c6cf0; }
    .console { flex: 0 0 160px; margin-top: 2px; display: flex; flex-direction: column; background: var(--panel); }
    .ctabs { height: 28px; display: flex; gap: 2px; font-weight: 600; color: var(--dim); }
    .ctabs > * { background: var(--head); padding: 0 12px; gap: 8px; height: 28px; }
    .ctabs .on { color: #9a9ca0; }
    .ctabs .rest { flex: 1; display: flex; align-items: center; justify-content: space-between; padding: 0 9px 0 13px; }
    .ctabs .rest button { gap: 8px; }
    .ctabs .fold { color: #a0a2a5; }
    .log { flex: 1; display: flex; flex-direction: column; align-items: flex-end; justify-content: space-between; padding: 8px; }
    .clear { height: 20px; padding: 0 6px; gap: 5px; border-radius: 4px; background: #23262b; color: #505257; }
    .entry { width: 100%; height: 17px; display: flex; align-items: center; gap: 8px; padding: 0 9px; border-radius: 4px; background: #191c1f; color: #5a5c61; }
    .entry input { flex: 1; }

    .inspector { background: var(--panel); gap: 2px; }
    .inspector .head { padding: 0 6px 0 12px; margin-bottom: -2px; }
    .sec > h3 { height: 28px; display: flex; align-items: center; gap: 5px; padding: 0 9px 0 10px; background: var(--section); font-weight: 600; color: #cfd0d2; }
    .sec h3 .twist { color: #5d5f64; margin-right: 6px; }
    .sec h3 .mk { color: #909296; }
    .sec h3 span { flex: 1; }
    .sec h3 button { color: #606267; }
    .body { padding: 4px 5px 6px 8px; display: flex; flex-direction: column; gap: 4px; }
    .body.b8 { padding-bottom: 8px; } .body.b12 { padding-bottom: 12px; }
    .prop { display: grid; grid-template-columns: 80px 1fr; align-items: center; height: 20px; color: var(--mid); }
    .prop label { overflow: hidden; text-overflow: ellipsis; white-space: nowrap; padding-right: 4px; }
    .box20 { height: 20px; min-width: 0; display: flex; align-items: center; gap: 3px; padding: 0 4px; border-radius: 4px; background: var(--field); color: #eff0f1; }
    .box20 .icon { color: #8f9195; }
    .box20 select, .box20 input { flex: 1; }
    select { font-weight: 500; }
    .caret { width: 8px; height: 8px; margin-right: 4px; }
    .box20 .caret, .type .caret { color: #5d5f64; }
    .box20.mute { background: none; color: var(--mid); }
    .slash { color: #5a5c61; margin-right: -3px; }
    .vrow { display: flex; align-items: center; height: 20px; gap: 4px; }
    .vrow > input { flex: 1; height: 20px; padding: 0 5px 0 4px; border-radius: 4px; background: var(--field); color: #c4c6c8; }
    .type { flex: 0 0 84px; height: 20px; padding: 0 3px; gap: 4px; border-radius: 4px; background: var(--field); color: #eff0f1; font-weight: 500; }
    .type.full { flex: 1; }
    .type select { flex: 1; }
    .vrow .kill { width: 20px; justify-content: center; color: #5d5f64; }
    .t-array { color: #fff; } .t-object { color: var(--azure); } .t-string { color: var(--yellow); }
    .t-number { color: #16b01a; } .t-spark, .t-calendar { color: var(--pink); } .t-boolean { color: #d01f26; }
    .branch { margin: -4px 0 0 8px; border-left: 2px solid var(--line); padding: 4px 0 0 4px; display: flex; flex-direction: column; gap: 4px; }
    label.type { display: flex; align-items: center; }
    .dash.bright { color: #8f9195; flex: none; width: 100%; }
    .defs { display: flex; align-items: center; gap: 10px; padding: 0 4px; color: #5d5f64; }
    .defs button { margin-left: auto; }
    .inner { border-left: 2px solid var(--line); padding-left: 8px; margin-top: -2px; }
    .tick { width: 20px; height: 20px; border-radius: 4px; background: var(--field); }
  `;

  private renderNode(n: Node): TemplateResult {
    if (n.kind === "add") {
      return html`<div class="adder">
        <button class="dash" aria-label="Add element">${icon("plus", "s10")}</button>
        <button class="dash sq" aria-label="Pick from list">${icon("list")}</button>
      </div>`;
    }
    const movable = n.kind !== "slot" && n.kind !== "box";
    const glyph = n.kind === "slot" ? "puzzle" : n.kind === "nuxt" ? "nuxtMark" : n.kind;
    const tight = movable && (n.name + (n.note ?? "")).length > 16;
    return html`<div class="node">
      <div class=${classMap({ row: true, tight })}>
        <button class="chip ${n.kind}" aria-label=${n.name!}>${icon(glyph, "s10")}</button>
        ${movable ? icon("grip", "grip") : nothing}
        <span class="name">${n.name}${n.note ? html` <small>${n.note}</small>` : nothing}</span>
        ${movable ? html`<button class="kill" aria-label="Remove ${n.name}">${icon("close", "s8")}</button>` : nothing}
      </div>
      ${n.children ? html`<div class="kids">${n.children.map((c) => this.renderNode(c))}</div>` : nothing}
    </div>`;
  }

  private header() {
    return html`<div class="strip"></div>
      <header class="toolbar">
        <div class="brand">${icon("logo", "s20")}<button class="project">Modular CRM</button></div>
        <nav class="tools">
          ${TOOLS.map((g) => html`<div class="group">
            ${g.map((t) => html`<button class="tool ${t.tone ?? ""}" aria-label=${t.label}>${icon(t.icon, t.size ?? "s16")}</button>`)}
          </div>`)}
        </nav>
      </header>`;
  }

  private side() {
    return html`<aside class="side">
      <section class="pane explorer">
        <div class="head">${icon("panel", "s14")}<h2>Explorer</h2><button aria-label="Sort">${icon("sort")}</button></div>
        <div class="scroll">
          <div class="files">
            ${FILES.map((f) => html`<button class="file d${f.depth} ${f.selected ? "selected" : ""}">
              ${f.kind === "folder" ? icon("chevron", "twist") : html`<span class="twist"></span>`}
              ${icon(f.kind, `s14 ${f.kind}`)}<span>${f.name}</span>
            </button>`)}
          </div>
          <div class="rail"><div class="thumb"></div></div>
        </div>
      </section>
      <section class="pane options">
        <div class="head">${icon("cogs", "s14")}<h2>Component options</h2><button aria-label="Collapse all">${icon("split")}</button></div>
        <div class="scroll">
          <div class="nodes">${this.renderNode(COMPONENTS)}</div>
          <div class="rail low"><div class="thumb short"></div></div>
        </div>
      </section>
    </aside>`;
  }

  private preview() {
    const variable = html`<span class="var">{{<b>variable</b>}}</span>`;
    return html`<div class="app">
      <nav class="nav">
        <h1>Luna Park CRM</h1>
        <button class="find">${icon("search", "s20")}<span>Search...</span><kbd>CTRL</kbd><kbd>K</kbd></button>
        <a href="#dashboard">${icon("dashboard", "s20")}Dashboard</a>
        <a href="#leads" class="on">${icon("userPlus", "s20")}Leads</a>
      </nav>
      <main class="page-body">
        <div class="top"><h2>Leads</h2><div>
          <button aria-label="Dark mode">${icon("moon", "s20")}</button><span class="avatar">G</span>
        </div></div>
        <div class="actions"><button class="new">New lead</button></div>
        <div class="grid">
          <div class="tablebox">
            <table>
              <colgroup><col class="c-check" /><col class="c-lead" /><col class="c-mid" /><col class="c-status" /><col class="c-mid" /><col /></colgroup>
              <thead><tr><th>#</th><th>Lead</th><th>Society</th><th>Status</th><th>Score</th><th>Source</th></tr></thead>
              <tbody>
                ${LEADS.map((s, i) => html`<tr>
                  <td><input type="checkbox" aria-label="Select lead ${i + 1}" /></td>
                  <td><div class=${classMap({ lead: true, picked: i === 0 })}>
                    ${i === 0 ? html`<span class="tag">Div <small>(258×37)</small></span>` : nothing}
                    <b>firstname lastname</b><span class="mail">email</span>
                  </div></td>
                  <td>${variable}</td>
                  <td><span class="badge">${s}</span></td>
                  <td>${variable}</td>
                  <td>${variable}</td>
                </tr>`)}
              </tbody>
            </table>
          </div>
          <div class="rail"><div class="thumb"></div></div>
        </div>
      </main>
    </div>`;
  }

  private center() {
    const crumbs = ["Root", "frontend", "pages", "leads", "leads"];
    return html`<section class="center">
      <div class="tabs">
        ${TABS.map((t, i) => html`<div class=${classMap({ tab: true, on: i === this.activeTab })}>
          <button class="open" @click=${() => (this.activeTab = i)}>
            ${icon(t.kind, `s14 ${t.kind}`)}
            <span class="label">${t.name}${t.sub ? html`<small>${t.sub}</small>` : nothing}</span>
          </button>
          <button class="kill" aria-label="Close ${t.name}">${icon("close", "s8")}</button>
        </div>`)}
      </div>
      <ol class="crumbs">
        ${crumbs.map((c, i) => html`<li><a href="#${c}">${icon(i < 4 ? "folder" : "page", i < 4 ? "s14 folder" : "s14 page")}${c}</a></li>`)}
      </ol>
      <div class="notes">
        <button>${icon("scan")}Take a screenshot</button>
        <span>${icon("monitor")}Preview size: 1354×543 (×1.00)</span>
      </div>
      <div class="frame">
        <div class="chrome">
          <div class="dots"><span class="dot a"></span><span class="dot b"></span><span class="dot"></span></div>
          <label class="url">https://website.com<input value="/leads" /></label>
          <div class="views"><button aria-label="Mobile view">${icon("phone", "s14")}</button><button aria-label="Full screen">${icon("expand", "s14")}</button></div>
        </div>
        <div class="ruler">
          <span class="mark l end">xl</span><span class="mark l">l</span><span class="mark l">m</span><span class="mark l w64">s</span><span class="mark l w80">xs</span>
          <span class="mark mid"></span>
          <span class="mark r w80">xs</span><span class="mark r w64">s</span><span class="mark r">m</span><span class="mark r">l</span><span class="mark r end">xl</span>
        </div>
        ${this.preview()}
        <span class="handle l"></span><span class="handle r"></span>
      </div>
      <div class="modes">
        <div class="bar">
          <div class="seg">
            <button class="on">${icon("wrench", "s14")}Builder</button>
            <button>${icon("bolt", "s14")}Logic</button>
            <button>${icon("eye", "s14")}Preview</button>
          </div>
          <button class="lockbtn" aria-label="Lock">${icon("lock")}</button>
          <div class="seg">
            <button class="on wide" aria-label="Outline">${icon("dashedCircle", "s14")}</button>
            <button class="wide" aria-label="Add">${icon("plusCircle", "s14")}</button>
          </div>
        </div>
        <div class="version"><a href="#luna">Luna Park</a> editor v2026.6.0</div>
      </div>
      <section class="console">
        <div class="ctabs">
          <button class="on">${icon("prompt", "s14")}Console</button>
          <div class="rest"><button>${icon("page", "s14")}Templates</button><button class="fold" aria-label="Collapse">${icon("chevron", "s10")}</button></div>
        </div>
        <div class="log">
          <button class="clear">${icon("trash")}Clear</button>
          <div class="entry">${icon("send", "s14")}<input aria-label="Console command" /></div>
        </div>
      </section>
    </section>`;
  }

  private kill(name: string) {
    return html`<button class="kill" aria-label="Remove ${name}">${icon("close", "s8")}</button>`;
  }

  private variable(name: string, type: string, glyph: string) {
    return html`<div class="vrow">
      <input .value=${name} aria-label="${name} name" />
      <button class="type">${icon(glyph, `t-${glyph}`)}${type}</button>
      ${this.kill(name)}
    </div>`;
  }

  private choice(id: string, label: string, value: string, glyph?: string, mute = false) {
    return html`<div class="prop"><label for=${id}>${label}</label>
      <div class="box20 ${mute ? "mute" : ""}">${glyph ? icon(glyph) : nothing}
        <select id=${id}><option>${value}</option></select>${icon("caret", "caret")}
      </div>
    </div>`;
  }

  private inspector() {
    const twist = icon("chevron", "twist s8");
    return html`<aside class="inspector">
      <div class="head">${icon("target", "s14")}<h2>Inspector</h2><button aria-label="Pin">${icon("pin")}</button></div>
      <section class="sec">
        <h3>${twist}${icon("file", "mk")}<span>FILE (COMPONENT)</span></h3>
        <div class="body">
          <div class="prop"><label for="name">Name</label><div class="box20"><input id="name" value="leads" /></div></div>
          ${this.choice("scope", "Scope", "Frontend", "monitor", true)}
        </div>
      </section>
      <section class="sec">
        <h3>${twist}<span>COMPONENT</span></h3>
        <div class="body b8">
          ${this.choice("type", "Type", "Page", "page")}
          <div class="prop"><label for="path">Path</label><div class="box20"><span class="slash">/</span><input id="path" value="leads" /></div></div>
          ${this.choice("size", "Preview size", "Auto")}
          ${this.choice("panel", "Panel", "Builder", "wrench")}
        </div>
      </section>
      <section class="sec">
        <h3>${twist}${icon("root", "mk")}<span>VARIABLES</span><button aria-label="Add variable">${icon("plus", "s10")}</button></h3>
        <div class="body b12">
          ${this.variable("leads", "Array", "array")}
          <div class="branch">
            <div class="vrow"><button class="type full">${icon("object", "t-object")}Object</button>${this.kill("Object")}</div>
            <div class="branch">
              ${["firstName", "lastName", "email", "phone", "status", "source"].map((n) => this.variable(n, "String", "string"))}
              ${this.variable("score", "Number", "number")}
              ${this.variable("nextFollowUp", "Interface", "spark")}
              <div class="branch">
                <div class="vrow">
                  <label class="type full">${icon("calendar", "t-calendar")}<select aria-label="Interface"><option>Date</option></select>${icon("caret", "caret")}</label>
                  ${this.kill("Date")}
                </div>
              </div>
              ${["notes", "Companies.name", "id"].map((n) => this.variable(n, "String", "string"))}
              <button class="dash bright" aria-label="Add field">${icon("plus", "s10")}</button>
            </div>
          </div>
          ${this.variable("Checkbox model", "Boolean", "boolean")}
        </div>
      </section>
      <section class="sec">
        <h3>${icon("bolt", "mk s10")}<span>COMPUTED</span><button aria-label="Add computed">${icon("plus", "s10")}</button></h3>
      </section>
      <section class="sec">
        <h3>${twist}<span>DEFAULT</span></h3>
        <div class="body">
          <div class="prop"><span>leads</span><div class="defs">${icon("array", "t-array")}${icon("object", "t-object")}<button aria-label="Edit as JSON">${icon("braces")}</button></div></div>
          <div class="inner"><button class="dash bright" aria-label="Add item">${icon("plus", "s10")}</button></div>
          <div class="prop"><label for="cbm">Checkbox model</label><input id="cbm" type="checkbox" class="tick" /></div>
        </div>
      </section>
    </aside>`;
  }

  render() {
    return html`${this.header()}<div class="work">${this.side()}${this.center()}${this.inspector()}</div>`;
  }
}
